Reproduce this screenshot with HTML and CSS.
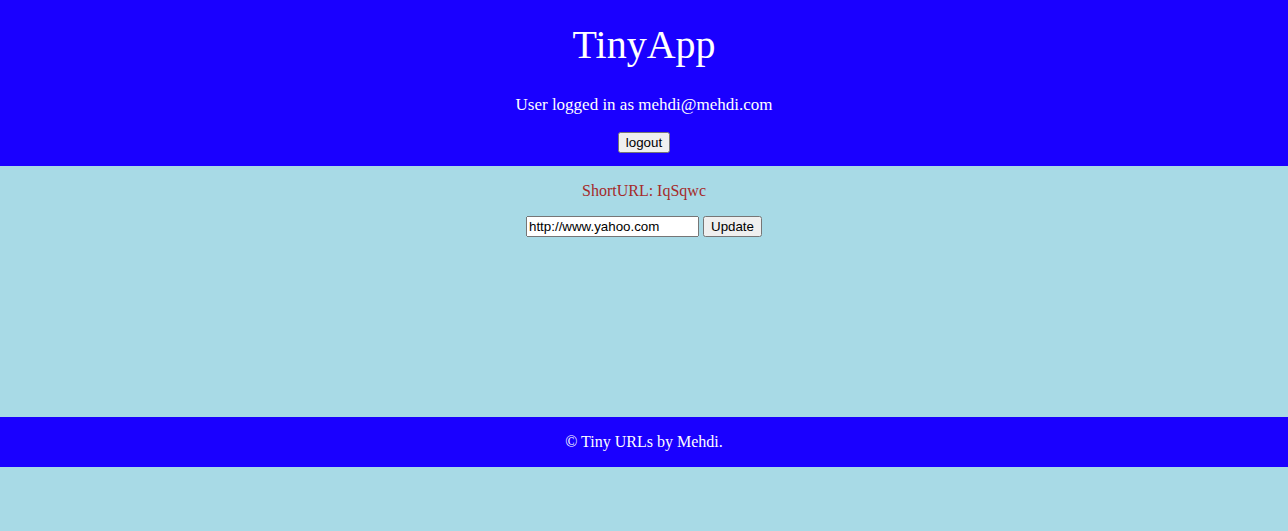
FILE: index.html
```html
<!DOCTYPE html>
<html>
<head>
<meta charset="utf-8">
<title>TinyApp</title>
<link rel="stylesheet" href="styles.css">
</head>
<body>
<header class="site-header">
  <h1 class="title">TinyApp</h1>
  <p class="user">User logged in as mehdi@mehdi.com</p>
  <form class="logout-form"><button type="button">logout</button></form>
</header>
<main class="content">
  <p class="short">ShortURL: IqSqwc</p>
  <form class="update-form">
    <input class="url-input" type="text" value="http://www.yahoo.com">
    <button type="button">Update</button>
  </form>
</main>
<footer class="site-footer">
  <p>© Tiny URLs by Mehdi.</p>
</footer>
</body>
</html>
```
FILE: styles.css
```css
html, body {
  margin: 0;
  padding: 0;
  background: #a8dae6;
  font-family: "Liberation Serif", "Times New Roman", serif;
}
.site-header {
  background: #1a00ff;
  color: #ffffff;
  text-align: center;
  padding: 22px 0 13px;
  display: flex;
  flex-direction: column;
  align-items: center;
}
.title {
  margin: 0;
  font-size: 40px;
  font-weight: normal;
  line-height: 46px;
}
.user {
  margin: 26px 0 0;
  font-size: 17px;
  line-height: 21px;
}
.logout-form {
  margin: 17px 0 0;
  height: 21px;
}
.content {
  height: 251px;
  box-sizing: border-box;
  padding-top: 16px;
  text-align: center;
}
.short {
  margin: 0;
  color: #a52a2a;
  font-size: 16px;
  line-height: 18px;
}
.update-form {
  margin-top: 16px;
}
.url-input {
  width: 173px;
  box-sizing: border-box;
  padding: 1px 1px;
}
.site-footer {
  background: #1a00ff;
  color: #ffffff;
  height: 50px;
  display: flex;
  align-items: center;
  justify-content: center;
}
.site-footer p {
  margin: 0;
  font-size: 16px;
  line-height: 18px;
}
```
